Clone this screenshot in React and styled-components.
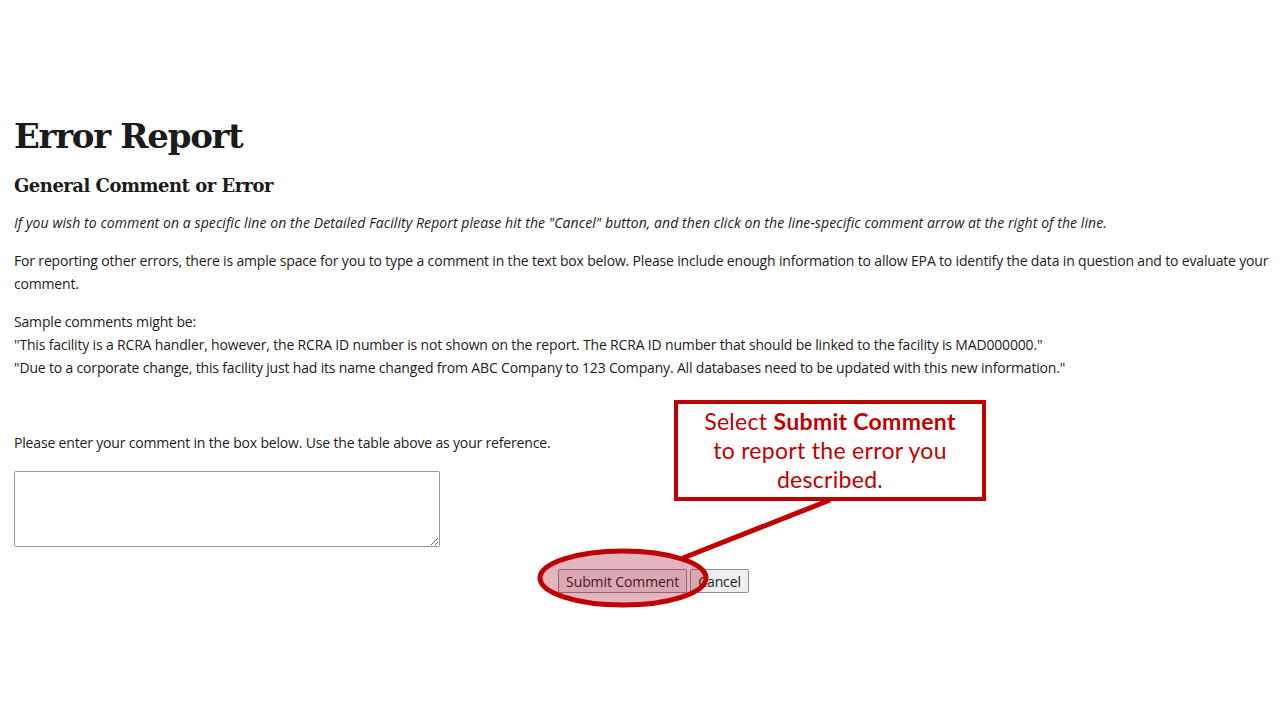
import React from 'react';
import styled, { createGlobalStyle } from 'styled-components';

/* Global */

const GlobalStyle = createGlobalStyle`
  html, body {
    margin: 0;
    padding: 0;
    background: #ffffff;
  }
  body {
    font-family: "Open Sans", "Noto Sans", sans-serif;
    color: #1b1b1b;
  }
`;

/* Styled Components */

const Page = styled.div`
  position: relative;
  width: 1280px;
  height: 720px;
  overflow: hidden;
  padding: 0 8px 0 14px;
  box-sizing: border-box;
`;

const Title = styled.h1`
  font-family: "DejaVu Serif", "Liberation Serif", serif;
  font-size: 34px;
  line-height: 44px;
  font-weight: 700;
  letter-spacing: -1.3px;
  margin: 114px 0 0 0;
`;

const Subtitle = styled.h2`
  font-family: "DejaVu Serif", "Liberation Serif", serif;
  font-size: 18px;
  line-height: 26px;
  font-weight: 700;
  letter-spacing: -0.5px;
  margin: 15px 0 0 0;
`;

const Paragraph = styled.p`
  font-size: 14px;
  line-height: 23px;
  letter-spacing: ${(props) => (props.italic ? '0.08px' : '-0.17px')};
  margin: ${(props) => props.top || 15}px 0 0 0;
  font-style: ${(props) => (props.italic ? 'italic' : 'normal')};
`;

const CommentBox = styled.textarea`
  display: block;
  width: 426px;
  height: 76px;
  box-sizing: border-box;
  margin-top: 17px;
  border: 1px solid #9a9a9a;
  border-radius: 2px;
  resize: both;
`;

const ButtonRow = styled.div`
  display: flex;
  justify-content: center;
  gap: 3px;
  margin-top: 22px;
  padding-left: 21px;
`;

const Button = styled.button`
  font-family: "Open Sans", "Noto Sans", sans-serif;
  font-size: 14px;
  letter-spacing: -0.1px;
  color: #1b1b1b;
  height: 24px;
  padding: 0 7px;
  background: #efefef;
  border: 1px solid #8f8f8f;
  border-radius: 2px;
`;

const Callout = styled.div`
  position: absolute;
  left: 674px;
  top: 400px;
  width: 312px;
  height: 101px;
  box-sizing: border-box;
  border: 4px solid #c00000;
  background: #ffffff;
  display: flex;
  align-items: center;
  justify-content: center;
  text-align: center;
  font-family: "Lato", "Liberation Sans", sans-serif;
  font-size: 23px;
  line-height: 29px;
  letter-spacing: 0.3px;
  color: #c00000;
`;

const Strong = styled.strong`
  font-weight: 700;
`;

const Marks = styled.svg`
  position: absolute;
  left: 0;
  top: 0;
  pointer-events: none;
`;

/* Main Component */

const App = () => (
  <>
    <GlobalStyle />
    <Page>
      <Title>Error Report</Title>
      <Subtitle>General Comment or Error</Subtitle>

      <Paragraph italic top={12}>
        If you wish to comment on a specific line on the Detailed Facility Report please hit the
        {' '}
        &quot;Cancel&quot; button, and then click on the line-specific comment arrow at the right of the line.
      </Paragraph>

      <Paragraph>
        For reporting other errors, there is ample space for you to type a comment in the text box
        below. Please include enough information to allow EPA to identify the data in question and
        to evaluate your comment.
      </Paragraph>

      <Paragraph>
        Sample comments might be:
        <br />
        &quot;This facility is a RCRA handler, however, the RCRA ID number is not shown on the
        report. The RCRA ID number that should be linked to the facility is MAD000000.&quot;
        <br />
        &quot;Due to a corporate change, this facility just had its name changed from ABC Company
        to 123 Company. All databases need to be updated with this new information.&quot;
      </Paragraph>

      <Paragraph top={52}>
        Please enter your comment in the box below. Use the table above as your reference.
      </Paragraph>

      <CommentBox />

      <ButtonRow>
        <Button type="button">Submit Comment</Button>
        <Button type="button">Cancel</Button>
      </ButtonRow>

      <Marks width="1280" height="720" viewBox="0 0 1280 720">
        <line x1="683" y1="558" x2="830" y2="500" stroke="#c00000" strokeWidth="5" />
        <ellipse
          cx="623"
          cy="578"
          rx="83"
          ry="27"
          fill="rgba(165, 0, 35, 0.29)"
          stroke="#c00000"
          strokeWidth="5"
        />
      </Marks>

      <Callout>
        <div>
          Select
          {' '}
          <Strong>Submit Comment</Strong>
          <br />
          to report the error you
          <br />
          described.
        </div>
      </Callout>
    </Page>
  </>
);

export default App;
